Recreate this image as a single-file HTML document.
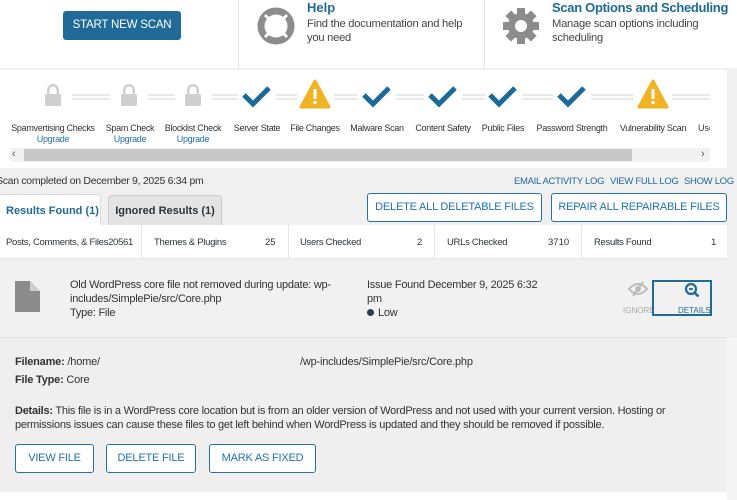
<!DOCTYPE html>
<html><head><meta charset="utf-8"><style>
*{margin:0;padding:0;box-sizing:border-box}
body{width:737px;height:500px;overflow:hidden;background:#f0f0f1;font-family:"Liberation Sans",sans-serif;color:#2c3338;position:relative}
.a{position:absolute;white-space:nowrap}
.btn{position:absolute;border:1px solid #2271b1;border-radius:3px;background:#fff;color:#2271b1;font-size:11px;text-align:center;letter-spacing:-.2px}
.lbl{position:absolute;font-size:9px;color:#333;text-align:center;width:90px;letter-spacing:-.3px;line-height:11px}
.up{color:#2271b1}
.t{font-size:10.5px;letter-spacing:-.3px}
</style></head><body>
<div class="a" style="left:0;top:0;width:737px;height:68px;background:#fff"></div>
<div class="a" style="left:238px;top:0;width:1px;height:68px;background:#e5e5e5"></div>
<div class="a" style="left:484px;top:0;width:1px;height:68px;background:#e5e5e5"></div>
<div class="a" style="left:63px;top:11px;width:118px;height:29px;background:#1f6a96;border-radius:3px;color:#fff;font-size:11.5px;text-align:center;line-height:29px;letter-spacing:-.2px">START NEW SCAN</div>
<svg class="a" style="left:256px;top:6px" width="40" height="40" viewBox="0 0 40 40"><circle cx="20" cy="20" r="15" fill="none" stroke="#8c8c8c" stroke-width="7"/><g stroke="#fff" stroke-width="3"><line x1="9" y1="9" x2="15" y2="15"/><line x1="31" y1="9" x2="25" y2="15"/><line x1="9" y1="31" x2="15" y2="25"/><line x1="31" y1="31" x2="25" y2="25"/></g></svg>
<div class="a" style="left:307px;top:0;font-size:13px;font-weight:bold;color:#1f6a96">Help</div>
<div class="a" style="left:307px;top:17px;font-size:11.2px;line-height:14px;color:#444;letter-spacing:-.25px">Find the documentation and help<br>you need</div>
<svg class="a" style="left:501px;top:6px" width="40" height="40" viewBox="0 0 40 40"><g fill="#8c8c8c"><circle cx="20" cy="20" r="13"/><g><rect x="16" y="2" width="8" height="36"/><rect x="2" y="16" width="36" height="8"/><rect x="16" y="2" width="8" height="36" transform="rotate(45 20 20)"/><rect x="16" y="2" width="8" height="36" transform="rotate(-45 20 20)"/></g></g><circle cx="20" cy="20" r="6" fill="#fff"/></svg>
<div class="a" style="left:552px;top:0;font-size:13px;font-weight:bold;color:#1f6a96;letter-spacing:-.3px">Scan Options and Scheduling</div>
<div class="a" style="left:552px;top:17px;font-size:11.2px;line-height:14px;color:#444;letter-spacing:-.25px">Manage scan options including<br>scheduling</div>
<div class="a" style="left:0;top:70px;width:727px;height:98px;background:#fff"></div>
<svg class="a" style="left:0;top:70px" width="727" height="60" viewBox="0 70 727 60">
<g stroke="#e2e2e2" stroke-width="1.5">
<line x1="72" y1="95" x2="110" y2="95"/><line x1="72" y1="99" x2="110" y2="99"/>
<line x1="148" y1="95" x2="175" y2="95"/><line x1="148" y1="99" x2="175" y2="99"/>
<line x1="212" y1="95" x2="238" y2="95"/><line x1="212" y1="99" x2="238" y2="99"/>
<line x1="276" y1="95" x2="297" y2="95"/><line x1="276" y1="99" x2="297" y2="99"/>
<line x1="334" y1="95" x2="358" y2="95"/><line x1="334" y1="99" x2="358" y2="99"/>
<line x1="396" y1="95" x2="424" y2="95"/><line x1="396" y1="99" x2="424" y2="99"/>
<line x1="462" y1="95" x2="485" y2="95"/><line x1="462" y1="99" x2="485" y2="99"/>
<line x1="522" y1="95" x2="553" y2="95"/><line x1="522" y1="99" x2="553" y2="99"/>
<line x1="591" y1="95" x2="633" y2="95"/><line x1="591" y1="99" x2="633" y2="99"/>
<line x1="672" y1="95" x2="710" y2="95"/><line x1="672" y1="99" x2="710" y2="99"/>
</g>
<g fill="#cfcfcf"><g id="lk"><path d="M47 96v-6a6 6 0 0 1 12 0v6h-2.5v-6a3.5 3.5 0 0 0-7 0v6z"/><rect x="45" y="94" width="16" height="12" rx="1"/></g>
<use href="#lk" x="76"/><use href="#lk" x="140"/></g>
<g fill="none" stroke="#1b6a97" stroke-width="5"><path d="M244 95l9 9 16-16"/><path d="M364 95l9 9 16-16"/><path d="M430 95l9 9 16-16"/><path d="M490 95l9 9 16-16"/><path d="M559 95l9 9 16-16"/></g>
<g><path d="M315 81l14 26h-28z" fill="#f0b323" stroke="#f0b323" stroke-width="3" stroke-linejoin="round"/><rect x="313.5" y="89" width="3" height="10" fill="#fff"/><rect x="313.5" y="101" width="3" height="3" fill="#fff"/>
<path d="M653 81l14 26h-28z" fill="#f0b323" stroke="#f0b323" stroke-width="3" stroke-linejoin="round"/><rect x="651.5" y="89" width="3" height="10" fill="#fff"/><rect x="651.5" y="101" width="3" height="3" fill="#fff"/></g>
</svg>
<div class="lbl" style="left:8px;top:123px">Spamvertising Checks<br><span class="up">Upgrade</span></div>
<div class="lbl" style="left:85px;top:123px">Spam Check<br><span class="up">Upgrade</span></div>
<div class="lbl" style="left:148px;top:123px">Blocklist Check<br><span class="up">Upgrade</span></div>
<div class="lbl" style="left:212px;top:123px">Server State</div>
<div class="lbl" style="left:270px;top:123px">File Changes</div>
<div class="lbl" style="left:332px;top:123px">Malware Scan</div>
<div class="lbl" style="left:398px;top:123px">Content Safety</div>
<div class="lbl" style="left:458px;top:123px">Public Files</div>
<div class="lbl" style="left:527px;top:123px">Password Strength</div>
<div class="lbl" style="left:608px;top:123px">Vulnerability Scan</div>
<div class="a" style="left:698px;top:123px;font-size:9px;color:#333;width:12px;overflow:hidden">User</div>
<div class="a" style="left:10px;top:148px;width:700px;height:14px;background:#f1f1f1"></div>
<div class="a" style="left:24px;top:149px;width:608px;height:12px;background:#c8c8c8"></div>
<div class="a" style="left:12px;top:148px;font-size:11px;color:#555">‹</div>
<div class="a" style="left:701px;top:148px;font-size:11px;color:#555">›</div>
<div class="a t" style="left:-4px;top:175px;color:#333">Scan completed on December 9, 2025 6:34 pm</div>
<div class="a" style="left:514px;top:176px;font-size:9.5px;color:#1f6a96;letter-spacing:-.3px">EMAIL ACTIVITY LOG</div>
<div class="a" style="left:610px;top:176px;font-size:9.5px;color:#1f6a96;letter-spacing:-.3px">VIEW FULL LOG</div>
<div class="a" style="left:684px;top:176px;font-size:9.5px;color:#1f6a96;letter-spacing:-.3px">SHOW LOG</div>
<div class="a" style="left:0;top:194px;width:101px;height:32px;background:#fff;border:1px solid #ddd;border-bottom:none;border-left:none;border-radius:0 4px 0 0;font-size:11px;font-weight:bold;color:#1f6a96;line-height:32px;padding-left:6px">Results Found (1)</div>
<div class="a" style="left:108px;top:195px;width:114px;height:30px;background:#e4e4e4;border:1px solid #ccc;border-bottom:none;border-radius:4px 4px 0 0;font-size:11px;font-weight:bold;color:#2c3338;line-height:30px;text-align:center">Ignored Results (1)</div>
<div class="btn" style="left:367px;top:193px;width:175px;height:29px;line-height:27px">DELETE ALL DELETABLE FILES</div>
<div class="btn" style="left:551px;top:193px;width:176px;height:29px;line-height:27px">REPAIR ALL REPAIRABLE FILES</div>
<div class="a" style="left:0;top:225px;width:727px;height:34px;background:#fff;border-bottom:1px solid #e5e5e5"></div>
<div class="a" style="left:141px;top:225px;width:1px;height:34px;background:#e5e5e5"></div>
<div class="a" style="left:288px;top:225px;width:1px;height:34px;background:#e5e5e5"></div>
<div class="a" style="left:434px;top:225px;width:1px;height:34px;background:#e5e5e5"></div>
<div class="a" style="left:581px;top:225px;width:1px;height:34px;background:#e5e5e5"></div>
<div class="a" style="left:6px;top:237px;font-size:9.5px;letter-spacing:-.3px">Posts, Comments, &amp; Files20561</div>
<div class="a" style="left:154px;top:237px;font-size:9.5px;letter-spacing:-.3px">Themes &amp; Plugins</div><div class="a" style="left:265px;top:237px;font-size:9.5px">25</div>
<div class="a" style="left:300px;top:237px;font-size:9.5px;letter-spacing:-.3px">Users Checked</div><div class="a" style="left:417px;top:237px;font-size:9.5px">2</div>
<div class="a" style="left:447px;top:237px;font-size:9.5px;letter-spacing:-.3px">URLs Checked</div><div class="a" style="left:548px;top:237px;font-size:9.5px">3710</div>
<div class="a" style="left:594px;top:237px;font-size:9.5px;letter-spacing:-.3px">Results Found</div><div class="a" style="left:711px;top:237px;font-size:9.5px">1</div>
<div class="a" style="left:0;top:260px;width:727px;height:78px;background:#f1f1f1;border-bottom:1px solid #e3e3e3"></div>
<svg class="a" style="left:15px;top:281px" width="26" height="31" viewBox="0 0 26 31"><path d="M0 0h15l10 10v21h-25z" fill="#8c8c8c"/><path d="M15 0v10h10" fill="#cfcfcf"/></svg>
<div class="a" style="left:70px;top:278px;font-size:11px;line-height:14px;color:#333;letter-spacing:-.25px">Old WordPress core file not removed during update: wp-<br>includes/SimplePie/src/Core.php<br>Type: File</div>
<div class="a" style="left:367px;top:278px;font-size:11px;line-height:14px;color:#333;letter-spacing:-.25px">Issue Found December 9, 2025 6:32<br>pm<br><span style="display:inline-block;width:7px;height:7px;border-radius:50%;background:#2c3e50;margin-right:4px"></span>Low</div>
<svg class="a" style="left:628px;top:281px" width="20" height="16" viewBox="0 0 20 16"><path d="M1 8q9-10 18 0q-9 10-18 0z" fill="none" stroke="#bbb" stroke-width="2"/><circle cx="10" cy="8" r="3" fill="#bbb"/><line x1="5" y1="15" x2="15" y2="1" stroke="#bbb" stroke-width="2"/></svg>
<div class="a" style="left:623px;top:306px;font-size:8px;color:#aaa">IGNORE</div>
<div class="a" style="left:652px;top:280px;width:60px;height:36px;border:2px solid #1f6a96;background:transparent"></div>
<svg class="a" style="left:684px;top:282px" width="16" height="16" viewBox="0 0 16 16"><circle cx="7" cy="7" r="5" fill="none" stroke="#1f6a96" stroke-width="2.2"/><line x1="5" y1="7" x2="9" y2="7" stroke="#1f6a96" stroke-width="1.8"/><line x1="10.5" y1="10.5" x2="14.5" y2="14.5" stroke="#1f6a96" stroke-width="2.5"/></svg>
<div class="a" style="left:678px;top:306px;font-size:8px;color:#1f6a96">DETAILS</div>
<div class="a" style="left:0;top:338px;width:727px;height:154px;background:#efefef"></div>
<div class="a" style="left:727px;top:338px;width:10px;height:162px;background:#f5f5f5"></div>
<div class="a" style="left:0;top:492px;width:727px;height:8px;background:#fff"></div>
<div class="a" style="left:15px;top:356px;font-size:11px;color:#333;letter-spacing:-.2px"><b>Filename:</b> /home/</div>
<div class="a" style="left:300px;top:356px;font-size:11px;color:#333;letter-spacing:-.2px">/wp-includes/SimplePie/src/Core.php</div>
<div class="a" style="left:15px;top:374px;font-size:11px;color:#333;letter-spacing:-.2px"><b>File Type:</b> Core</div>
<div class="a" style="left:15px;top:404px;font-size:11px;line-height:14px;color:#333;letter-spacing:-.25px"><b>Details:</b> This file is in a WordPress core location but is from an older version of WordPress and not used with your current version. Hosting or<br>permissions issues can cause these files to get left behind when WordPress is updated and they should be removed if possible.</div>
<div class="btn" style="left:15px;top:444px;width:79px;height:29px;line-height:27px">VIEW FILE</div>
<div class="btn" style="left:106px;top:444px;width:90px;height:29px;line-height:27px">DELETE FILE</div>
<div class="btn" style="left:209px;top:444px;width:107px;height:29px;line-height:27px">MARK AS FIXED</div>
</body></html>
